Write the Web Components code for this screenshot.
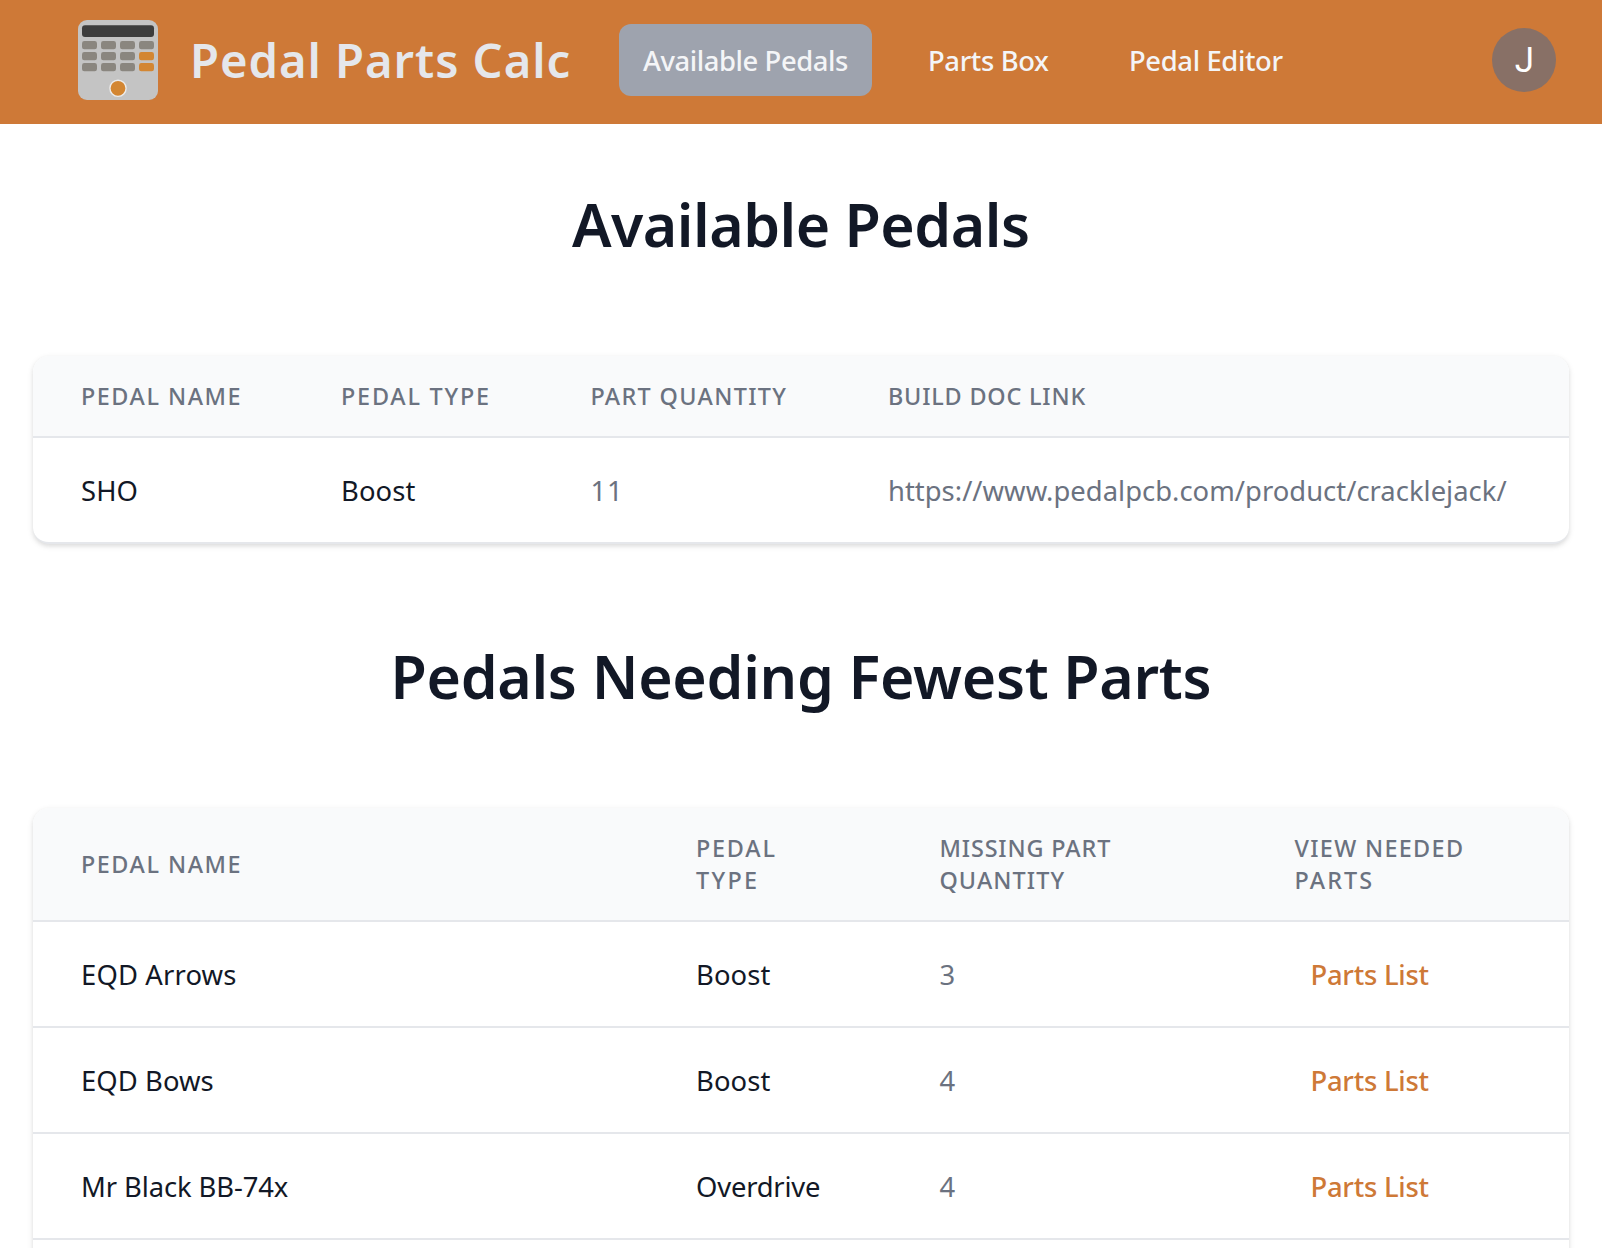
<!DOCTYPE html>
<html lang="en">
<head>
<meta charset="utf-8">
<title>Pedal Parts Calc</title>
<style>
html,body{margin:0;background:#fff}
body{height:1248px;overflow:hidden;font-family:"Noto Sans","Open Sans",sans-serif}
</style>
</head>
<body>
<pedal-app></pedal-app>
<script>
const attach=(el,html)=>{el.attachShadow({mode:'open'}).innerHTML=html;};
const pen=document.createElement('canvas').getContext('2d');

// Tracks its text so that the drawn glyphs span the given number of pixels.
customElements.define('fit-text',class extends HTMLElement{
  constructor(){super();attach(this,`<style>
    :host{display:block;white-space:nowrap;width:max-content}
    span{display:block}</style><span><slot></slot></span>`);}
  connectedCallback(){
    const target=parseFloat(this.getAttribute('span')),s=getComputedStyle(this),t=this.textContent.trim();
    if(!target||!t)return;
    pen.font=`${s.fontWeight} ${s.fontSize} ${s.fontFamily}`;
    const m=pen.measureText(t),ink=m.actualBoundingBoxLeft+m.actualBoundingBoxRight;
    if(t.length>1){
      const gap=(target-ink)/(t.length-1),span=this.shadowRoot.querySelector('span');
      span.style.letterSpacing=gap.toFixed(3)+'px';
      span.style.marginRight=(-gap).toFixed(3)+'px';
    }
  }
});

customElements.define('pedal-logo',class extends HTMLElement{
  constructor(){super();
    const keys=[[41,0],[52,1],[63,2]].map(([y,r])=>[82,101,120,139].map((x,c)=>
      `<rect x="${x}" y="${y}" width="15" height="8.3" rx="2.4" fill="${c===3&&r>0?'#d38632':'#8a867f'}"/>`).join('')).join('');
    attach(this,`<style>:host{display:block;width:80px;height:80px}svg{display:block}</style>
    <svg width="80" height="80" viewBox="78 20 80 80">
      <rect x="78" y="20" width="80" height="80" rx="9" fill="#c4c4c4"/>
      <rect x="82" y="25.2" width="72" height="11.8" rx="3" fill="#3d3d3d"/>${keys}
      <circle cx="118" cy="88.3" r="8.1" fill="#d38632" stroke="#ececec" stroke-width="1.4"/>
    </svg>`);}
});

customElements.define('nav-link',class extends HTMLElement{
  constructor(){super();attach(this,`<style>
    :host{display:flex;align-items:center;box-sizing:border-box;height:72px;padding:1px 24px 0;border-radius:12px;
      color:#f4f5f7;font-size:27.4px;font-weight:520;line-height:40px}
    :host([active]){background:#9ea3ae}</style><slot></slot>`);}
});

customElements.define('user-avatar',class extends HTMLElement{
  constructor(){super();attach(this,`<style>
    :host{display:flex;align-items:center;justify-content:center;box-sizing:border-box;width:64px;height:64px;border-radius:50%;
      padding:1px 0 0 1px;background:#887066;color:#fff;font:400 35px/63px Roboto,sans-serif}</style><slot></slot>`);}
});

customElements.define('app-bar',class extends HTMLElement{
  constructor(){super();attach(this,`<style>
    :host{display:flex;align-items:flex-start;box-sizing:border-box;height:124px;padding:20px 46px 0 78px;background:#ce7937}
    .brand{box-sizing:border-box;width:461px;height:80px;display:flex;align-items:center;gap:32px}
    .name{color:#e5e7eb;font-size:47.2px;font-weight:570;line-height:64px}
    nav{display:flex;gap:32px;padding:4px 0 0 80px}
    nav-link:nth-child(1){width:253px}nav-link:nth-child(2){width:169px}nav-link:nth-child(3){width:201px}
    user-avatar{margin:8px 0 0 auto}</style>
    <div class="brand"><pedal-logo></pedal-logo><div class="name"><fit-text span="375.5">Pedal Parts Calc</fit-text></div></div>
    <nav>
      <nav-link active><fit-text span="205">Available Pedals</fit-text></nav-link>
      <nav-link><fit-text span="119">Parts Box</fit-text></nav-link>
      <nav-link><fit-text span="152.5">Pedal Editor</fit-text></nav-link>
    </nav>
    <user-avatar>J</user-avatar>`);}
});

customElements.define('section-title',class extends HTMLElement{
  constructor(){super();attach(this,`<style>
    :host{display:flex;justify-content:center;color:#121826}
    h2{margin:0;font-size:59px;font-weight:580;line-height:72px}</style><h2><slot></slot></h2>`);}
});

customElements.define('table-row',class extends HTMLElement{
  constructor(){super();attach(this,`<style>
    :host{display:grid;grid-template-columns:var(--cols);align-items:center;box-sizing:border-box;
      padding:33px 0 31px;font-size:27.4px;font-weight:430;line-height:40px;color:#121826;border-top:2px solid #e5e7eb}
    :host([head]){padding:24px 0;font-size:23.4px;line-height:32px;font-weight:500;color:#6b7280;background:#f9fafb;border-top:0}
    ::slotted(*){padding-left:48px}
    ::slotted(.muted){color:#6b7280;font-weight:450}
    ::slotted(.link){padding-left:64px;color:#ce7937;font-weight:540}</style><slot></slot>`);}
});

customElements.define('data-table',class extends HTMLElement{
  constructor(){super();attach(this,`<style>
    :host{display:block;border-radius:16px;overflow:hidden;background:#fff;border-bottom:2px solid #e5e7eb;
      box-shadow:0 2px 6px rgba(0,0,0,.1),0 2px 4px rgba(0,0,0,.06)}</style><slot></slot>`);}
});

customElements.define('pedal-app',class extends HTMLElement{
  constructor(){super();
    const cell=([t,w],cls='')=>`<div class="${cls}">${[].concat(t).map((s,i)=>`<fit-text span="${[].concat(w)[i]}">${s}</fit-text>`).join('')}</div>`;
    const row=cells=>`<table-row>${cells.map(c=>cell(c,c[2])).join('')}</table-row>`;
    const head=cells=>`<table-row head>${cells.map(c=>cell(c)).join('')}</table-row>`;
    const parts=['Parts List',116,'link'];
    attach(this,`<style>
    :host{display:block}
    main{display:flex;flex-direction:column;gap:96px;padding:64px 33px 0}
    .ready{--cols:260px 249.4px 297.6px 1fr}
    .needed{--cols:615px 243.4px 355.1px 1fr}</style>
    <app-bar></app-bar>
    <main>
      <section-title><fit-text span="456">Available Pedals</fit-text></section-title>
      <data-table class="ready">
        ${head([['PEDAL NAME',156.6],['PEDAL TYPE',145],['PART QUANTITY',193.9],['BUILD DOC LINK',195.4]])}
        ${row([['SHO',54.6],['Boost',72.5],['11',24.5,'muted'],['https://www.pedalpcb.com/product/cracklejack/',616.4,'muted']])}
      </data-table>
      <section-title><fit-text span="814">Pedals Needing Fewest Parts</fit-text></section-title>
      <data-table class="needed">
        ${head([['PEDAL NAME',156.6],[['PEDAL','TYPE'],[76.4,60]],[['MISSING PART','QUANTITY'],[168.8,124]],[['VIEW NEEDED','PARTS'],[167.4,74.8]]])}
        ${row([['EQD Arrows',152.3],['Boost',72.5],['3',15,'muted'],parts])}
        ${row([['EQD Bows',129.6],['Boost',72.5],['4',15,'muted'],parts])}
        ${row([['Mr Black BB-74x',204.8],['Overdrive',123],['4',15,'muted'],parts])}
        ${row([])}
      </data-table>
    </main>`);}
});
</script>
</body>
</html>
